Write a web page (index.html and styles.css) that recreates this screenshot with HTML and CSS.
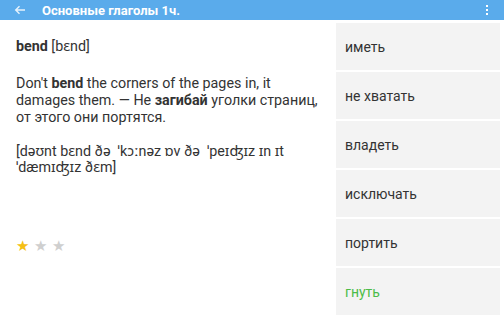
FILE: index.html
```html
<!DOCTYPE html>
<html lang="ru">
<head>
    <meta charset="UTF-8">
    <title>Основные глаголы 1ч.</title>
    <link rel="stylesheet" href="styles.css">
</head>
<body>
    <div class="toolbar">
        <svg class="back" width="12" height="10" viewBox="0 0 12 10">
            <path d="M11 5H2M5.5 1.2L1.7 5l3.8 3.8" fill="none" stroke="#e6f2fc" stroke-width="1.4"/>
        </svg>
        <span class="title">Основные глаголы 1ч.</span>
        <div class="menu">
            <span></span><span></span><span></span>
        </div>
    </div>

    <div class="main">
        <div class="card">
            <p class="word"><b>bend</b> [bɛnd]</p>
            <p class="example">Don't <b>bend</b> the corners of the pages in, it damages them. — Не <b>загибай</b> уголки страниц, от этого они портятся.</p>
            <p class="transcription">[dəʊnt bɛnd ðə &nbsp;ˈkɔːnəz ɒv ðə &nbsp;ˈpeɪʤɪz ɪn ɪt ˈdæmɪʤɪz ðɛm]</p>
            <div class="stars">
                <span class="star on">★</span>
                <span class="star">★</span>
                <span class="star">★</span>
            </div>
        </div>

        <div class="answers">
            <div class="answer">иметь</div>
            <div class="answer">не хватать</div>
            <div class="answer">владеть</div>
            <div class="answer">исключать</div>
            <div class="answer">портить</div>
            <div class="answer right">гнуть</div>
        </div>
    </div>
</body>
</html>
```

FILE: styles.css
```css
body {
    margin: 0;
    font-family: Roboto, "Noto Sans", sans-serif;
    color: #333;
    background: #fff;
    width: 504px;
    height: 315px;
    overflow: hidden;
}

.toolbar {
    height: 20px;
    background-color: #5aabeb;
    display: flex;
    align-items: center;
    color: #fff;
}

.back {
    margin-left: 14px;
    margin-right: 16px;
}

.title {
    font-size: 13px;
    font-weight: bold;
}

.menu {
    margin-left: auto;
    margin-right: 16px;
    display: flex;
    flex-direction: column;
    gap: 1.5px;
}

.menu span {
    width: 2.5px;
    height: 2.5px;
    background: #fff;
}

.main {
    display: flex;
    height: 295px;
}

.card {
    width: 320px;
    padding: 18px 0 0 16px;
    font-size: 14.3px;
    line-height: 17px;
}

.card p {
    margin: 0;
}

.word {
    margin-bottom: 20px !important;
}

.example {
    width: 306px;
    margin-bottom: 17px !important;
}

.transcription {
    width: 290px;
    line-height: 16px;
}

.stars {
    margin-top: 63px;
    display: flex;
    gap: 5px;
    font-size: 15px;
}

.star {
    color: #cfcfcf;
}

.star.on {
    color: #f5bf14;
}

.answers {
    width: 164px;
    padding-top: 3px;
    display: flex;
    flex-direction: column;
    gap: 2px;
}

.answer {
    height: 47px;
    background: #f3f3f3;
    display: flex;
    align-items: center;
    padding-left: 9px;
    font-size: 14px;
}

.answer.right {
    color: #4cbc48;
}
```
